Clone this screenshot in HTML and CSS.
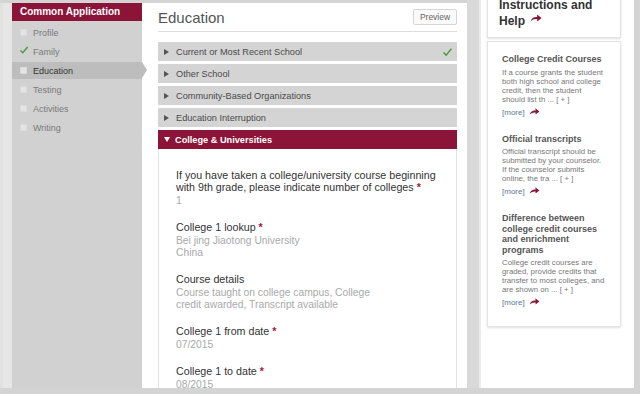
FILE: index.html
```html
<!DOCTYPE html>
<html lang="en">
<head>
  <meta charset="UTF-8" />
  <title>Common Application - Education</title>
  <link rel="stylesheet" href="styles.css">
</head>
<body>

<div class="screen">
  <div class="edge"></div>

  <!-- Left menu -->
  <nav class="sidebar">
    <div class="sidebar-title">Common Application</div>
    <ul class="steps">
      <li><span class="box"></span>Profile</li>
      <li><svg class="tick" viewBox="0 0 10 9"><path d="M0.5 5 L3.5 8 L9.5 0.8" /></svg>Family</li>
      <li class="current"><span class="box"></span>Education</li>
      <li><span class="box"></span>Testing</li>
      <li><span class="box"></span>Activities</li>
      <li><span class="box"></span>Writing</li>
    </ul>
  </nav>

  <!-- Form -->
  <main class="main">
    <div class="page-head">
      <h1>Education</h1>
      <button class="preview">Preview</button>
    </div>

    <div class="section"><span class="arrow"></span>Current or Most Recent School
      <svg class="section-tick" viewBox="0 0 10 9"><path d="M0.5 5 L3.5 8 L9.5 0.8" /></svg>
    </div>
    <div class="section"><span class="arrow"></span>Other School</div>
    <div class="section"><span class="arrow"></span>Community-Based Organizations</div>
    <div class="section"><span class="arrow"></span>Education Interruption</div>
    <div class="section open"><span class="arrow"></span>College &amp; Universities</div>

    <div class="section-body">
      <div class="field">
        <div class="label">If you have taken a college/university course beginning with 9th grade, please indicate number of colleges <span class="req">*</span></div>
        <div class="value">1</div>
      </div>
      <div class="field">
        <div class="label">College 1 lookup <span class="req">*</span></div>
        <div class="value">Bei jing Jiaotong University<br>China</div>
      </div>
      <div class="field">
        <div class="label">Course details</div>
        <div class="value">Course taught on college campus, College<br>credit awarded, Transcript available</div>
      </div>
      <div class="field">
        <div class="label">College 1 from date <span class="req">*</span></div>
        <div class="value">07/2015</div>
      </div>
      <div class="field">
        <div class="label">College 1 to date <span class="req">*</span></div>
        <div class="value">08/2015</div>
      </div>
    </div>
  </main>

  <div class="gutter"></div>

  <!-- Help column -->
  <aside class="help">
    <div class="card help-head">
      <h2>Instructions and Help <svg class="go big" viewBox="0 0 12 8"><path d="M0.5 7.5 C1.5 3.8 4.5 2.6 7.2 3 L7 0.4 L11.6 3.9 L7.2 7.4 L7.2 5.2 C4.8 4.8 2.6 5.6 0.5 7.5 Z" /></svg></h2>
    </div>
    <div class="card">
      <div class="tip">
        <h3>College Credit Courses</h3>
        <p>If a course grants the student both high school and college credit, then the student should list th ... [ + ]</p>
        <a class="more" href="#">[more] <svg class="go" viewBox="0 0 12 8"><path d="M0.5 7.5 C1.5 3.8 4.5 2.6 7.2 3 L7 0.4 L11.6 3.9 L7.2 7.4 L7.2 5.2 C4.8 4.8 2.6 5.6 0.5 7.5 Z" /></svg></a>
      </div>
      <div class="tip">
        <h3>Official transcripts</h3>
        <p>Official transcript should be submitted by your counselor. If the counselor submits online, the tra ... [ + ]</p>
        <a class="more" href="#">[more] <svg class="go" viewBox="0 0 12 8"><path d="M0.5 7.5 C1.5 3.8 4.5 2.6 7.2 3 L7 0.4 L11.6 3.9 L7.2 7.4 L7.2 5.2 C4.8 4.8 2.6 5.6 0.5 7.5 Z" /></svg></a>
      </div>
      <div class="tip">
        <h3>Difference between college credit courses and enrichment programs</h3>
        <p>College credit courses are graded, provide credits that transfer to most colleges, and are shown on ... [ + ]</p>
        <a class="more" href="#">[more] <svg class="go" viewBox="0 0 12 8"><path d="M0.5 7.5 C1.5 3.8 4.5 2.6 7.2 3 L7 0.4 L11.6 3.9 L7.2 7.4 L7.2 5.2 C4.8 4.8 2.6 5.6 0.5 7.5 Z" /></svg></a>
      </div>
    </div>
  </aside>

  <div class="edge-r"></div>
</div>

</body>
</html>
```

FILE: styles.css
```css
body {
  margin: 0;
  background: #d4d4d4;
  font-family: "Liberation Sans", Arial, sans-serif;
  color: #333;
}
.screen {
  display: flex;
  width: 640px;
  height: 388px;
  overflow: hidden;
}
.edge {
  width: 9px;
  background: #e6e6e6;
  border-left: 3px solid #e1e1e1;
  margin-top: 3px;
}

/* sidebar */
.sidebar {
  width: 130px;
  margin-top: 3px;
  background: #d1d1d1;
}
.sidebar-title {
  height: 18px;
  line-height: 18px;
  background: #8c1438;
  color: #fff;
  font-weight: bold;
  font-size: 10px;
  padding-left: 8px;
}
.steps {
  list-style: none;
  margin: 3px 0 0;
  padding: 0;
}
.steps li {
  position: relative;
  display: flex;
  align-items: center;
  height: 17px;
  margin-bottom: 2px;
  padding-left: 8px;
  font-size: 9px;
  color: #7a7a7a;
}
.steps li.current {
  background: #bdbdbd;
  color: #333;
}
.steps li.current::after {
  content: "";
  position: absolute;
  right: -5px;
  top: 0;
  border-left: 5px solid #bdbdbd;
  border-top: 8.5px solid transparent;
  border-bottom: 8.5px solid transparent;
}
.box {
  width: 5px;
  height: 5px;
  background: #e4e4e4;
  border: 1px solid #dadada;
  margin-right: 6px;
}
.tick {
  width: 8px;
  height: 8px;
  margin-right: 5px;
  margin-top: -3px;
  fill: none;
  stroke: #4f9a3a;
  stroke-width: 1.8;
}

/* main form */
.main {
  width: 325px;
  box-sizing: border-box;
  margin-top: 3px;
  padding: 0 10px 0 16px;
  background: #fff;
  display: flex;
  flex-direction: column;
}
.page-head {
  flex-shrink: 0;
  display: flex;
  justify-content: space-between;
  align-items: center;
  height: 28px;
  border-bottom: 1px solid #dedede;
  margin-bottom: 10px;
}
.page-head h1 {
  margin: 0;
  font-size: 15px;
  font-weight: normal;
  color: #555;
}
.preview {
  height: 16px;
  width: 44px;
  padding: 0;
  font-family: inherit;
  font-size: 8.5px;
  color: #666;
  background: #fafafa;
  border: 1px solid #d6d6d6;
  border-radius: 2px;
}
.section {
  flex-shrink: 0;
  display: flex;
  align-items: center;
  height: 19px;
  margin-bottom: 3px;
  padding-left: 6px;
  background: #d4d4d4;
  font-size: 9.2px;
  color: #4a4a4a;
}
.arrow {
  border-left: 5px solid #555;
  border-top: 3px solid transparent;
  border-bottom: 3px solid transparent;
  margin-right: 7px;
}
.section-tick {
  width: 9px;
  height: 8px;
  margin-left: auto;
  margin-right: 5px;
  fill: none;
  stroke: #4f9a3a;
  stroke-width: 1.7;
}
.section.open {
  margin-bottom: 0;
  background: #8c1438;
  color: #fff;
  font-weight: bold;
}
.section.open .arrow {
  border-left: 3.5px solid transparent;
  border-right: 3.5px solid transparent;
  border-top: 5px solid #fff;
  border-bottom: 0;
  margin-right: 5px;
}
.section-body {
  flex: 1;
  min-height: 0;
  border-left: 1px solid #e2e2e2;
  border-right: 1px solid #e2e2e2;
  padding: 20px 10px 0 17px;
}
.field {
  margin-bottom: 14px;
}
.label {
  font-size: 10.7px;
  line-height: 12px;
  color: #333;
}
.req {
  color: #a3173c;
  font-weight: bold;
}
.value {
  margin-top: 2px;
  font-size: 10.3px;
  line-height: 12px;
  color: #a9a9a9;
}

.gutter {
  width: 12px;
  background: #d9d9d9;
  border-right: 2px solid #ececec;
}

/* help column */
.help {
  width: 153px;
  box-sizing: border-box;
  padding: 0 13px 0 6px;
  background: #fff;
  overflow: hidden;
}
.card {
  background: #fff;
  border: 1px solid #e4e4e4;
  box-shadow: 0 1px 2px rgba(0,0,0,0.12);
  margin-bottom: 3px;
}
.help-head {
  margin-top: -12px;
  padding: 8px 11px 8px;
}
.help-head h2 {
  margin: 0;
  font-size: 12px;
  line-height: 16px;
  color: #333;
}
.go {
  width: 11px;
  height: 7px;
  fill: #8c1438;
  margin-left: 2px;
}
.go.big {
  width: 12px;
  height: 8px;
  vertical-align: 3px;
}
.card + .card {
  padding: 12px 15px 18px 14px;
}
.tip + .tip {
  margin-top: 16px;
}
.tip h3 {
  margin: 0;
  font-size: 9px;
  line-height: 10.5px;
  color: #555;
}
.tip p {
  margin: 3px 0 0;
  font-size: 7.8px;
  line-height: 9px;
  color: #777;
}
.more {
  display: block;
  margin-top: 4px;
  font-size: 8px;
  line-height: 10px;
  color: #5d7896;
  text-decoration: none;
}
```
